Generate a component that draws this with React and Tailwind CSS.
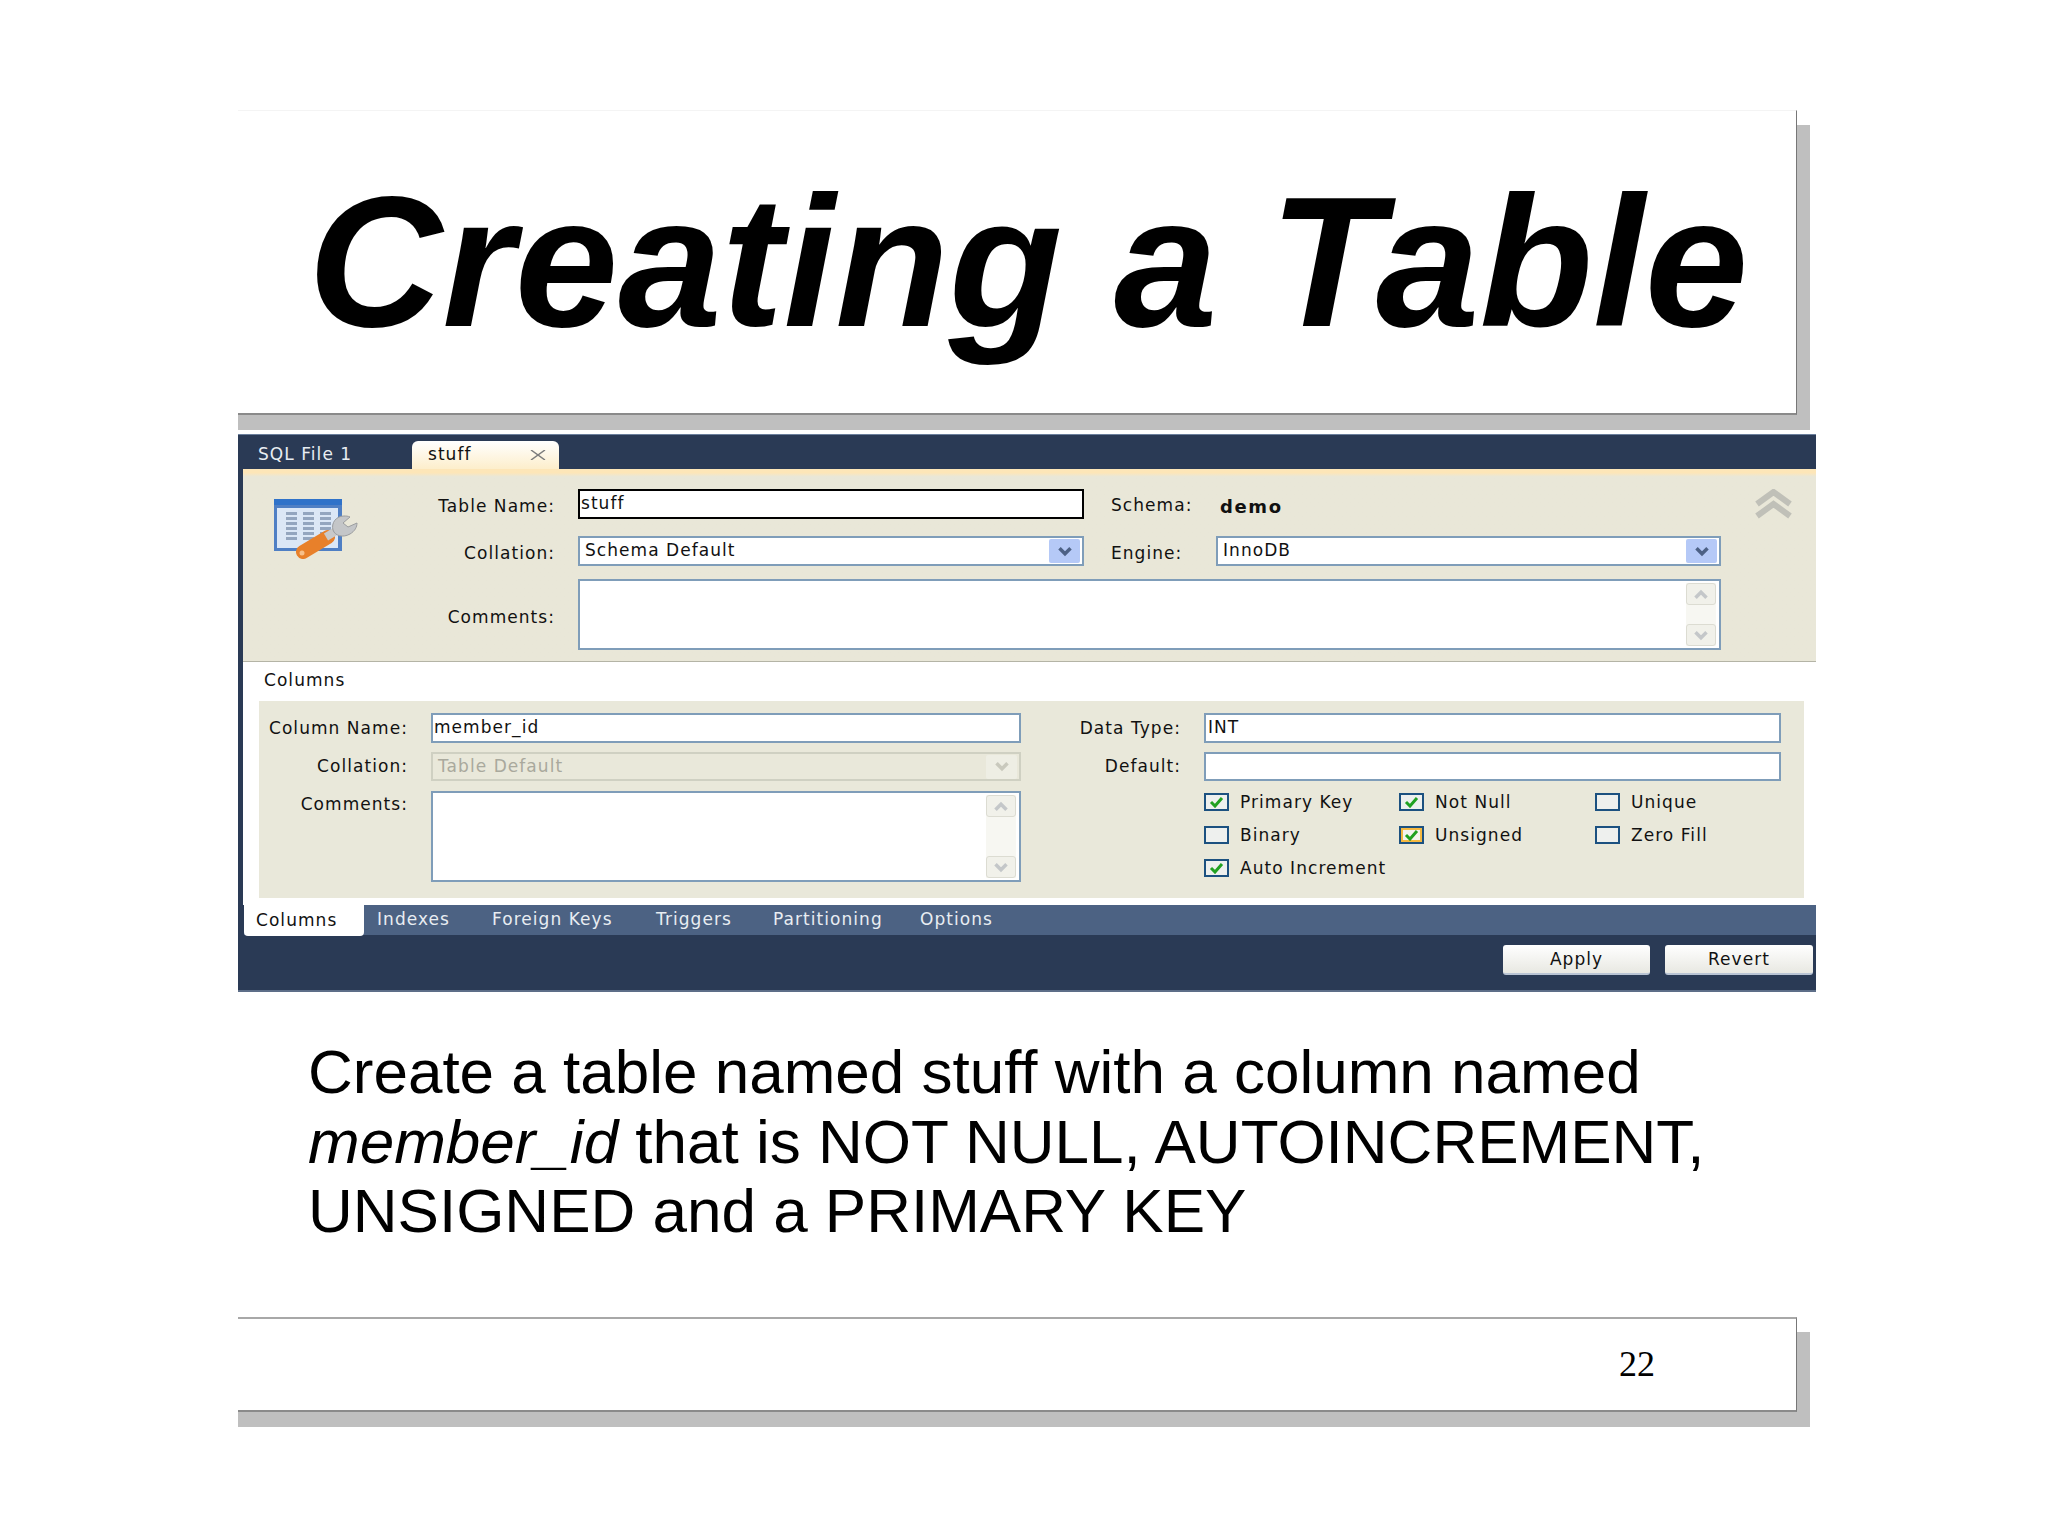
import React from 'react';

const uiFont = "font-['DejaVu_Sans',sans-serif] text-[17px] tracking-[1.05px]";

const ChevronDown = ({ color = '#4d6185', width = 16, height = 11 }) => (
    <svg width={width} height={height} viewBox="0 0 14 10" fill="none">
        <path d="M2 2 L7 7 L12 2" stroke={color} strokeWidth="3.2" />
    </svg>
);

const ChevronUp = ({ color = '#c4c7c9', width = 16, height = 11 }) => (
    <svg width={width} height={height} viewBox="0 0 14 10" fill="none">
        <path d="M2 8 L7 3 L12 8" stroke={color} strokeWidth="3.2" />
    </svg>
);

const TableIcon = () => (
    <svg className="blur-[0.6px]" width="110" height="80" viewBox="0 0 110 80" fill="none">
        <rect x="14" y="9" width="68" height="52" fill="#4f7fc4" />
        <rect x="14" y="9" width="68" height="6" fill="#2f72c9" />
        <rect x="17" y="18" width="61" height="40" fill="#dbe7f6" />
        {[22, 27, 32, 37, 42, 47].map((y) => (
            <g key={y} fill="#94a6bf">
                <rect x="26" y={y} width="11" height="3" />
                <rect x="43" y={y} width="11" height="3" />
                <rect x="60" y={y} width="11" height="3" />
            </g>
        ))}
        <path d="M43 62 L68 47" stroke="#e8802a" strokeWidth="14" strokeLinecap="round" />
        <circle cx="42" cy="63" r="2.5" fill="#f7c08a" />
        <path d="M66 47 L76 41" stroke="#c9c9c9" strokeWidth="8" />
        <path d="M84 26 C76 26 71 33 73 40 C75 46 83 48 90 44 C95 41 97 37 97 33 L88 37 L83 33 L90 27 C88 26 86 26 84 26 Z" fill="#c4c6c8" stroke="#9a9c9e" strokeWidth="1" />
    </svg>
);

const Label = ({ width, className = '', children }) => (
    <div className={`${width} ${className} shrink-0 text-right mr-[23px] text-[#111] whitespace-nowrap`}>{children}</div>
);

const Select = ({ value, width, disabled }) => (
    <div className={`${width} h-full flex items-center justify-between pl-[5px] pr-[2px] border-2 ${disabled ? 'border-[#cfd0c2] bg-[#e9e8da] text-[#a9a99d]' : 'border-[#7f9db9] bg-white text-[#111]'}`}>
        <span>{value}</span>
        <div className={`w-[31px] h-[24px] flex items-center justify-center rounded-[2px] ${disabled ? 'bg-[#eeeee4]' : 'bg-[#b5c9f7]'}`}>
            <ChevronDown color={disabled ? '#c9c9bd' : '#4d6185'} />
        </div>
    </div>
);

const ScrollBox = ({ width, height }) => (
    <div className={`${width} ${height} flex justify-end py-[2px] pr-[3px] border-2 border-[#7f9db9] bg-white`}>
        <div className="w-[30px] flex flex-col justify-between bg-[#f7f7f2]">
            <div className="h-[22px] flex items-center justify-center bg-[#f1f1ea] border border-[#dcdcd2] rounded-[3px]">
                <ChevronUp />
            </div>
            <div className="h-[22px] flex items-center justify-center bg-[#f1f1ea] border border-[#dcdcd2] rounded-[3px]">
                <ChevronDown color="#c4c7c9" />
            </div>
        </div>
    </div>
);

const Checkbox = ({ label, checked, focus }) => (
    <div className="flex items-center h-[18px]">
        <div className={`w-[25px] h-[18px] shrink-0 flex items-center justify-center border-2 border-[#1c5180] ${focus ? 'bg-[#f4f4ee] shadow-[inset_0_0_0_2px_#f5b942]' : 'bg-[#eef0ee]'}`}>
            {checked && (
                <svg width="15" height="12" viewBox="0 0 15 12" fill="none">
                    <path d="M2 6 L6 10 L13 2" stroke="#21a121" strokeWidth="3" />
                </svg>
            )}
        </div>
        <span className="ml-[11px] pt-[2px] text-[#111] whitespace-nowrap">{label}</span>
    </div>
);

const ColumnRow = ({ label, labelWidth, className, children }) => (
    <div className={`flex items-center ${className}`}>
        <Label width={labelWidth} className="pt-[1px]">{label}</Label>
        {children}
    </div>
);

const App = () => {
    return (
        <div className="w-[2048px] h-[1535px] bg-white pt-[110px] pl-[238px] overflow-hidden">
            {/* title box */}
            <div className="w-[1559px] h-[305px] flex pl-[70px] pt-[51px] bg-white border-t border-r border-b-2 border-t-[#f4f4f4] border-r-[#777] border-b-[#8a8a8a] shadow-[13px_15px_0_#bfbfbf,0_15px_0_#bfbfbf]">
                <h1 className="font-['Liberation_Sans',sans-serif] font-bold italic text-[186px] leading-[200px] text-black whitespace-nowrap">
                    Creating a Table
                </h1>
            </div>

            {/* the MySQL Workbench shot */}
            <div className={`w-[1578px] h-[558px] mt-[19px] bg-[#2a3a55] flex flex-col ${uiFont}`}>
                <div className="h-[35px] shrink-0 flex items-end pl-[20px] border-t border-[#6b7f9c]">
                    <div className="w-[154px] h-[27px] text-[#e8edf2]">SQL File 1</div>
                    <div className="w-[147px] h-[28px] flex items-center justify-between pl-[16px] pr-[13px] rounded-t-[6px] bg-gradient-to-b from-white to-[#fdeecb] text-[#111]">
                        <span>stuff</span>
                        <svg width="16" height="10" viewBox="0 0 16 10" fill="none">
                            <path d="M1 0 L15 10 M15 0 L1 10" stroke="#7d7d7d" strokeWidth="1.5" />
                        </svg>
                    </div>
                </div>

                <div className="h-[193px] shrink-0 ml-[5px] flex border-b border-[#b4b4a6] bg-gradient-to-b from-[#fde6b8] from-2% to-[#e9e7d8] to-[4%]">
                    <div className="w-[127px] shrink-0 pl-[17px] pt-[21px]">
                        <TableIcon />
                    </div>
                    <div className="flex-1 pt-[20px]">
                        <div className="flex items-center h-[30px]">
                            <Label width="w-[185px]" className="pt-[5px]">Table Name:</Label>
                            <div className="w-[506px] h-full pl-[1px] border-2 border-black bg-white leading-[24px] text-[#111]">stuff</div>
                            <div className="w-[109px] ml-[27px] pt-[4px] shrink-0 text-[#111]">Schema:</div>
                            <div className="pt-[4px] font-bold text-[18px] tracking-[1.6px] text-[#111]">demo</div>
                            <svg className="ml-auto mr-[23px]" width="39" height="30" viewBox="0 0 39 30" fill="none">
                                <path d="M3 15 L19.5 3 L36 15 M3 27 L19.5 15 L36 27" stroke="#c0c0b8" strokeWidth="6" />
                            </svg>
                        </div>
                        <div className="flex items-center h-[30px] mt-[17px]">
                            <Label width="w-[185px]" className="pt-[5px]">Collation:</Label>
                            <Select value="Schema Default" width="w-[506px]" />
                            <div className="w-[105px] ml-[27px] pt-[5px] shrink-0 text-[#111]">Engine:</div>
                            <Select value="InnoDB" width="w-[505px]" />
                        </div>
                        <div className="flex items-center h-[71px] mt-[13px]">
                            <Label width="w-[185px]" className="pt-[7px]">Comments:</Label>
                            <ScrollBox width="w-[1143px]" height="h-full" />
                        </div>
                    </div>
                </div>

                <div className="h-[243px] shrink-0 ml-[5px] bg-white">
                    <div className="h-[39px] flex items-center pb-[2px] pl-[21px] text-[#111]">Columns</div>
                    <div className="w-[1545px] h-[197px] ml-[16px] pt-[12px] flex bg-[#e9e8da]">
                        <div className="w-[762px] shrink-0">
                            <ColumnRow label="Column Name:" labelWidth="w-[149px]" className="h-[30px]">
                                <div className="w-[590px] h-full flex items-center pl-[1px] border-2 border-[#7f9db9] bg-white text-[#111]">member_id</div>
                            </ColumnRow>
                            <ColumnRow label="Collation:" labelWidth="w-[149px]" className="h-[29px] mt-[9px]">
                                <Select value="Table Default" width="w-[590px]" disabled />
                            </ColumnRow>
                            <div className="flex mt-[10px]">
                                <Label width="w-[149px]" className="pt-[1px]">Comments:</Label>
                                <ScrollBox width="w-[590px]" height="h-[91px]" />
                            </div>
                        </div>
                        <div className="flex-1">
                            <ColumnRow label="Data Type:" labelWidth="w-[160px]" className="h-[30px]">
                                <div className="w-[577px] h-full flex items-center pl-[2px] border-2 border-[#7f9db9] bg-white text-[#111]">INT</div>
                            </ColumnRow>
                            <ColumnRow label="Default:" labelWidth="w-[160px]" className="h-[29px] mt-[9px]">
                                <div className="w-[577px] h-full border-2 border-[#7f9db9] bg-white" />
                            </ColumnRow>
                            <div className="grid grid-cols-[195px_196px_1fr] gap-y-[15px] pl-[183px] mt-[12px]">
                                <Checkbox label="Primary Key" checked />
                                <Checkbox label="Not Null" checked />
                                <Checkbox label="Unique" />
                                <Checkbox label="Binary" />
                                <Checkbox label="Unsigned" checked focus />
                                <Checkbox label="Zero Fill" />
                                <Checkbox label="Auto Increment" checked />
                            </div>
                        </div>
                    </div>
                </div>

                <div className="h-[30px] shrink-0 ml-[6px] flex bg-[#4c6283] text-[#e8edf2]">
                    <div className="w-[120px] h-[31px] pl-[12px] flex items-center bg-white text-[#111] rounded-b-[4px]">Columns</div>
                    <div className="w-[128px] pl-[13px] flex items-center">Indexes</div>
                    <div className="w-[164px] flex items-center">Foreign Keys</div>
                    <div className="w-[117px] flex items-center">Triggers</div>
                    <div className="w-[147px] flex items-center">Partitioning</div>
                    <div className="flex items-center">Options</div>
                </div>

                <div className="flex-1 flex justify-end gap-[15px] pt-[10px] pr-[3px] border-b-2 border-[#5d6e88]">
                    <button className="w-[147px] h-[30px] pt-[2px] rounded-[3px] bg-gradient-to-b from-white to-[#e8e8e2] border-b-2 border-b-[#b9c4d4] text-[#111]">Apply</button>
                    <button className="w-[148px] h-[30px] pt-[2px] rounded-[3px] bg-gradient-to-b from-white to-[#e8e8e2] border-b-2 border-b-[#b9c4d4] text-[#111]">Revert</button>
                </div>
            </div>

            <div className="mt-[45px] pl-[70px] font-['Liberation_Sans',sans-serif] text-[62px] leading-[69.5px] text-black whitespace-nowrap">
                <div>Create a table named stuff with a column named</div>
                <div><em>member_id</em> that is NOT NULL, AUTOINCREMENT,</div>
                <div>UNSIGNED and a PRIMARY KEY</div>
            </div>

            {/* footer box */}
            <div className="w-[1559px] h-[95px] mt-[71px] flex items-center justify-end pr-[141px] bg-white border-t-2 border-r border-b-2 border-t-[#a8a8a8] border-r-[#777] border-b-[#8a8a8a] shadow-[13px_15px_0_#bfbfbf,0_15px_0_#bfbfbf]">
                <span className="font-['Liberation_Serif',serif] text-[36px] text-black">22</span>
            </div>
        </div>
    );
};

export default App;
